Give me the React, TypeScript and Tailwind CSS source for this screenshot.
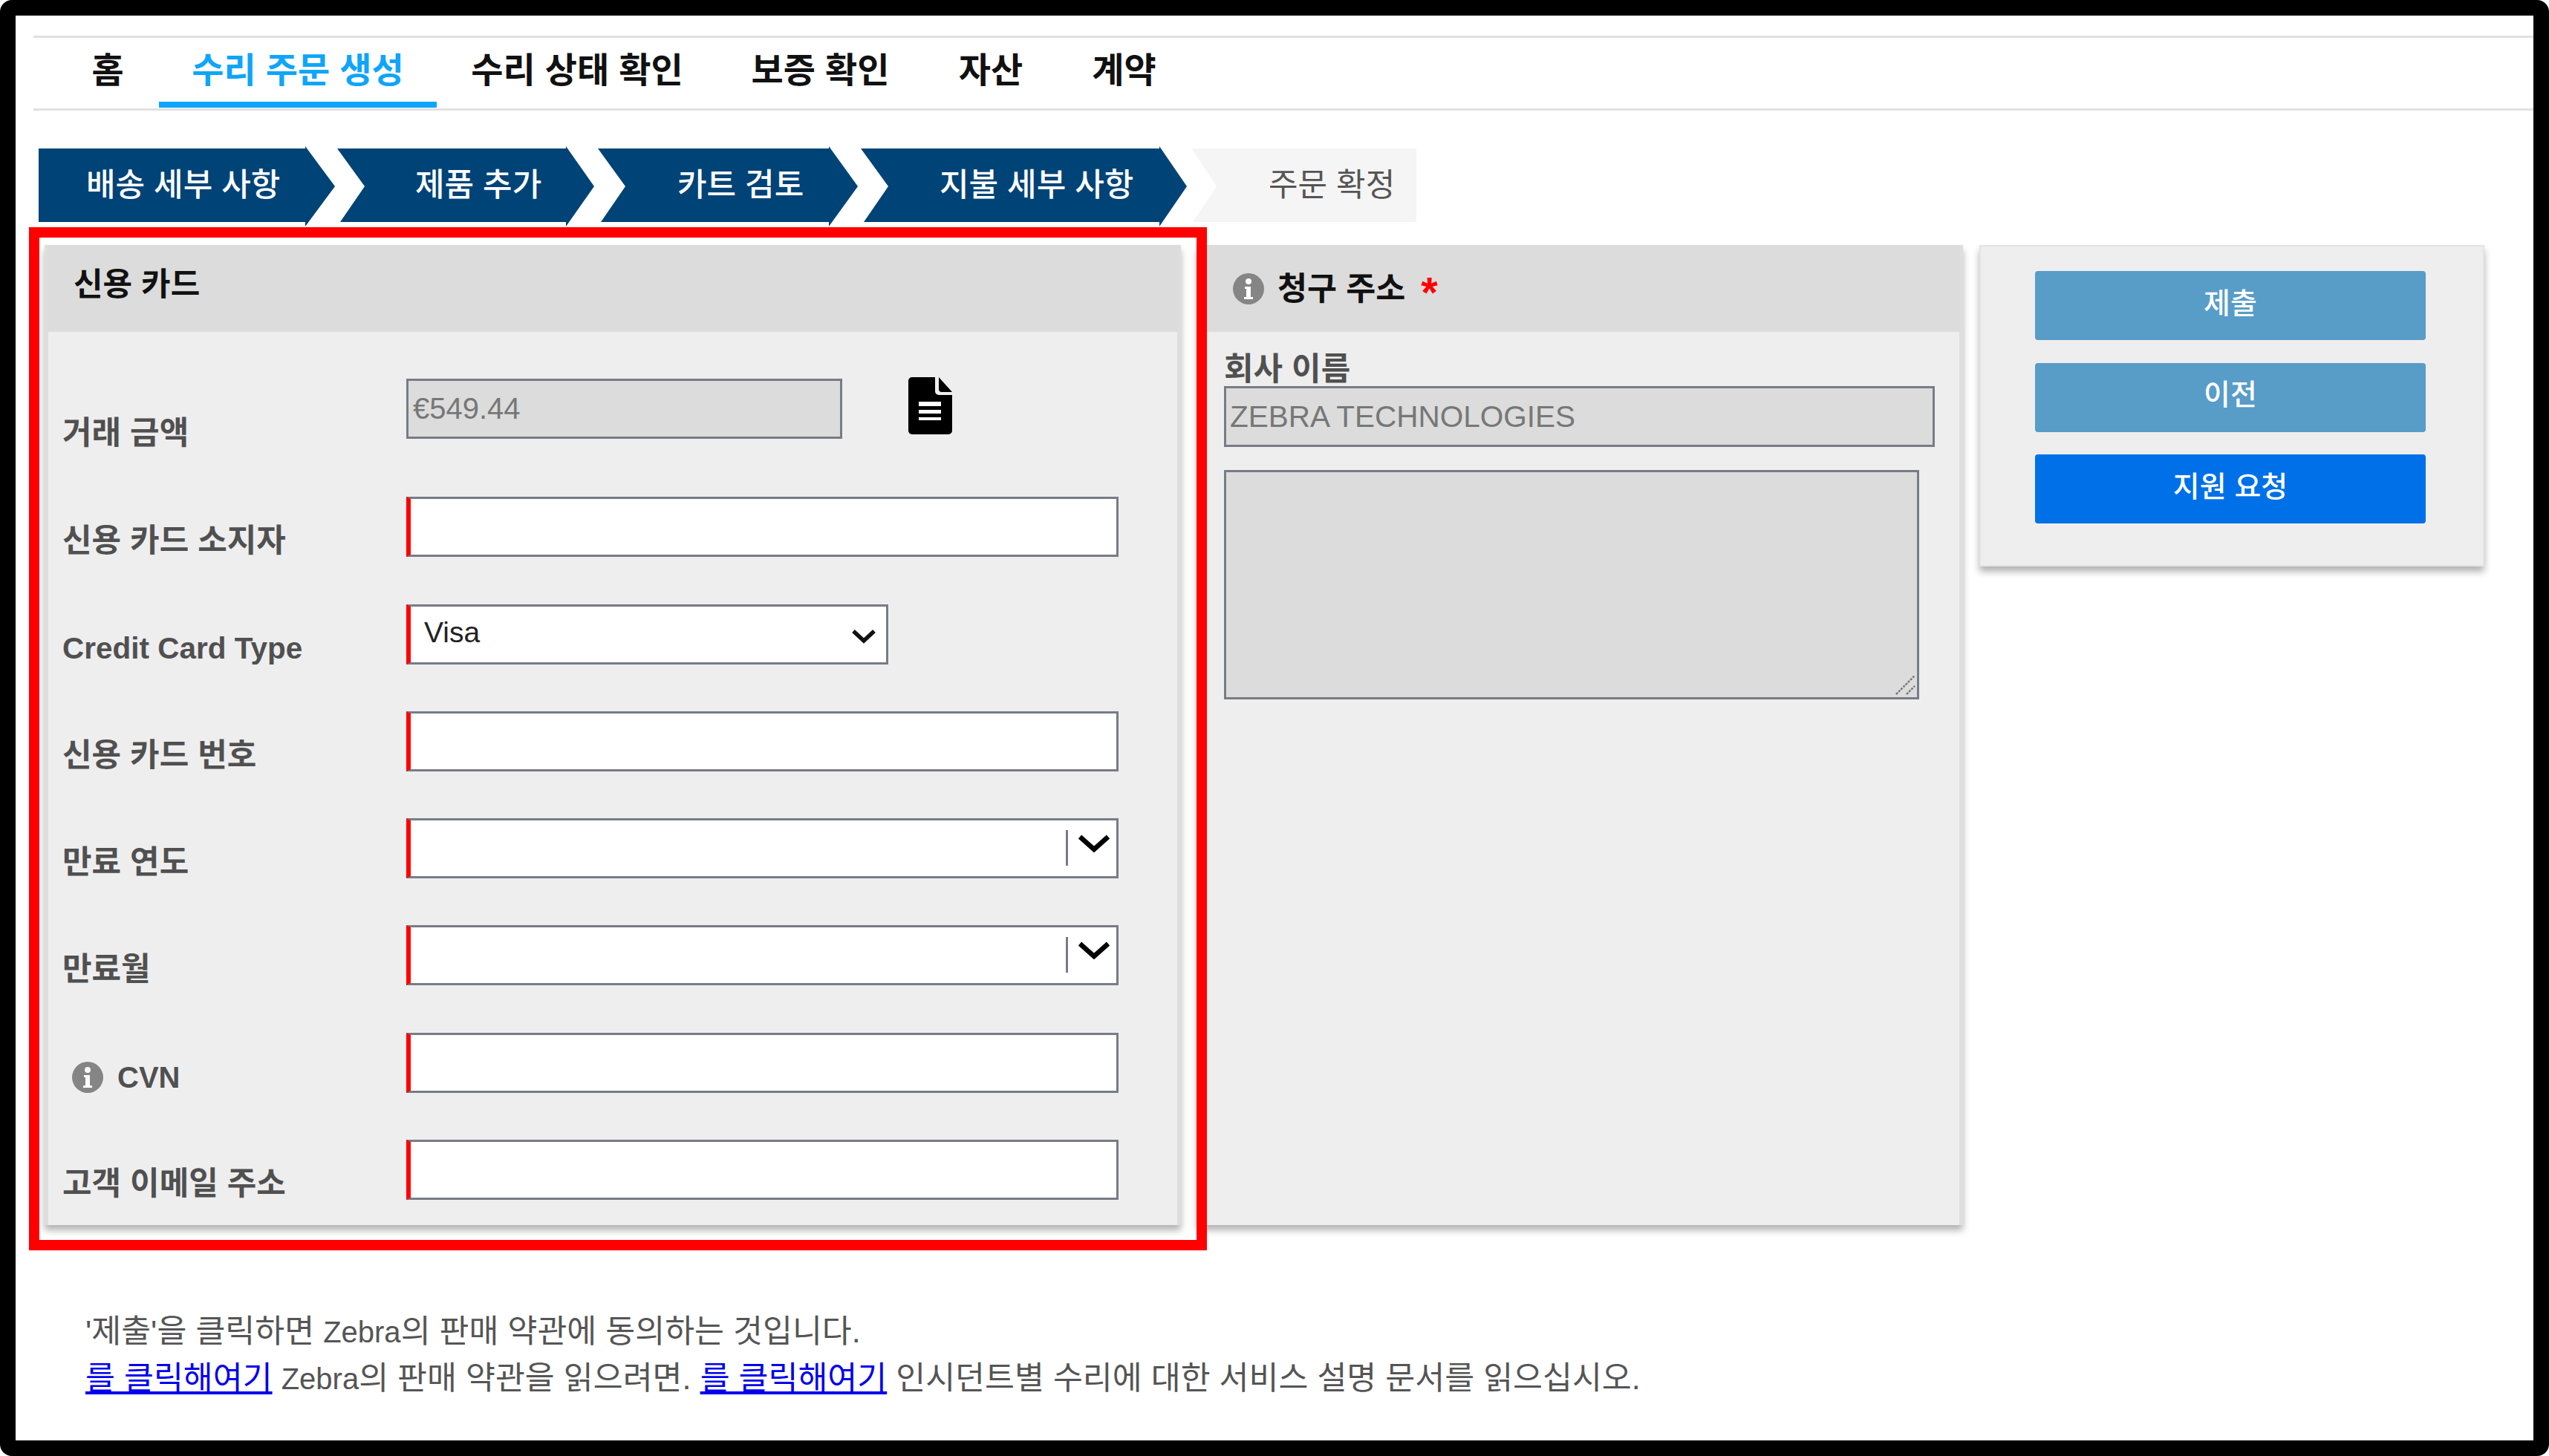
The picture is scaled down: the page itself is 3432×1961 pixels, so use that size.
import React from "react";

const navItems = [
  { t: "홈", w: "w-[138px]" },
  { t: "수리 주문 생성", w: "w-[374px]", active: true },
  { t: "수리 상태 확인", w: "w-[378px]" },
  { t: "보증 확인", w: "w-[277px]" },
  { t: "자산", w: "w-[182px]" },
  { t: "계약", w: "w-[177px]" },
];

function Info() {
  return (
    <svg viewBox="0 0 42 42" className="w-[42px] h-[42px] shrink-0">
      <circle cx="21" cy="21" r="21" fill="#858585" />
      <circle cx="21" cy="11" r="4" fill="#fff" />
      <path d="M16 18h8v14h3v3H15v-3h3V21h-2z" fill="#fff" />
    </svg>
  );
}

function DocIcon() {
  return (
    <svg viewBox="0 0 59 77" className="w-[59px] h-[77px] ml-[89px] self-start -mt-[2px] shrink-0">
      <path d="M5 0H36V19a5 5 0 0 0 5 5H59V72a5 5 0 0 1-5 5H5a5 5 0 0 1-5-5V5a5 5 0 0 1 5-5z" fill="#000" />
      <path d="M41 0L59 20H45a4 4 0 0 1-4-4z" fill="#000" />
      <rect x="14" y="33" width="30" height="6" fill="#fff" />
      <rect x="14" y="44" width="30" height="5" fill="#fff" />
      <rect x="14" y="54" width="30" height="4" fill="#fff" />
    </svg>
  );
}

function Label({ children, extra = "text-[43px]" }: { children: React.ReactNode; extra?: string }) {
  return (
    <label className={"w-[463px] shrink-0 flex items-center font-bold text-[#505050] leading-[43px] " + extra}>
      {children}
    </label>
  );
}

const field =
  "h-[81px] border-[3px] border-[#777c86] border-l-[6px] border-l-[#ff0000] bg-white";

function Combo() {
  return (
    <div className={field + " w-[959px] flex items-start justify-end pr-[8px]"}>
      <div className="w-[3px] h-[48px] mt-[13px] bg-[#777c86]" />
      <svg viewBox="0 0 44 24" className="w-[44px] h-[24px] ml-[13px] mt-[19px]">
        <path d="M3 3L22 20L41 3" fill="none" stroke="#000" strokeWidth="6.5" />
      </svg>
    </div>
  );
}

function Step({
  text,
  cls,
  done = true,
}: {
  text: string;
  cls: string;
  done?: boolean;
}) {
  return (
    <div
      className={
        "h-[108px] flex items-center text-[43px] leading-none pb-[3px] " +
        (done ? "bg-[#004377] text-white font-medium " : "bg-[#f5f5f5] text-[#555] ") +
        cls
      }
    >
      {text}
    </div>
  );
}

function Btn({ text, cls }: { text: string; cls: string }) {
  return (
    <button className={"w-[526px] h-[93px] rounded-[4px] text-white text-[39px] font-medium leading-none pb-[7px] " + cls}>
      {text}
    </button>
  );
}

export default function App() {
  return (
    <div className="w-[3432px] h-[1961px] bg-black rounded-[16px] p-[21px] font-['Liberation_Sans','Noto_Sans_CJK_KR',sans-serif] overflow-hidden">
      <div className="relative h-full bg-white flex flex-col">
        <nav className="ml-[24px] mt-[27px] h-[101px] border-y-[3px] border-[#e1e1e1] flex pl-[31px] shrink-0">
          {navItems.map((n) => (
            <div
              key={n.t}
              className={
                "h-[94px] flex items-center justify-center border-b-[8px] text-[47px] font-bold leading-none " +
                n.w +
                (n.active ? " border-[#0ea5fb] text-[#0ea5fb]" : " border-transparent text-[#111]")
              }
            >
              {n.t}
            </div>
          ))}
        </nav>

        <div className="flex ml-[31px] mt-[48px] shrink-0">
          <Step
            text="배송 세부 사항"
            cls="w-[399px] pl-[64px] [clip-path:polygon(0_3px,359px_3px,359px_0,100%_54px,359px_108px,359px_102px,0_102px)]"
          />
          <Step
            text="제품 추가"
            cls="w-[346px] ml-[3px] pl-[105px] [clip-path:polygon(0_3px,308px_3px,308px_0,100%_54px,308px_108px,308px_102px,4px_102px,37px_54px)]"
          />
          <Step
            text="카트 검토"
            cls="w-[350px] ml-[5px] pl-[107px] [clip-path:polygon(0_3px,311px_3px,311px_0,100%_54px,311px_108px,311px_102px,4px_102px,37px_54px)]"
          />
          <Step
            text="지불 세부 사항"
            cls="w-[439px] ml-[4px] pl-[106px] [clip-path:polygon(0_3px,402px_3px,402px_0,100%_54px,402px_108px,402px_102px,4px_102px,37px_54px)]"
          />
          <Step
            text="주문 확정"
            done={false}
            cls="w-[303px] ml-[6px] pl-[104px] font-normal [clip-path:polygon(0_3px,100%_3px,100%_102px,2px_102px,34px_54px)]"
          />
        </div>

        <div className="flex items-start ml-[39px] mt-[25px] shrink-0">
          {/* Credit card */}
          <section className="w-[1530px] h-[1320px] bg-[#eeeeee] border-x-[5px] border-[#dedede] shadow-[0_7px_9px_rgba(0,0,0,0.3)]">
            <header className="h-[117px] -mx-[1px] bg-[#dcdcdc] flex items-center pl-[35px] pb-[10px] text-[43px] font-bold text-[#111] leading-none">
              신용 카드
            </header>
            <div className="pl-[19px] pt-[63px] flex flex-col gap-[63.3px]">
              <div className="flex items-end h-[81px] mb-[15px]">
                <Label extra="text-[43px] -mb-[14px]">거래 금액</Label>
                <input
                  readOnly
                  value="€549.44"
                  className="w-[587px] h-[81px] border-[3px] border-[#777c86] bg-[#dcdcdc] pl-[6px] text-[40px] text-[#777]"
                />
                <DocIcon />
              </div>
              <div className="flex items-end h-[81px]">
                <Label>신용 카드 소지자</Label>
                <input className={field + " w-[959px]"} />
              </div>
              <div className="flex items-end h-[81px]">
                <Label extra="text-[40.5px]">Credit Card Type</Label>
                <div className="relative">
                  <select className={field + " w-[649px] appearance-none pl-[18px] text-[39px] text-[#222] pb-[3px]"}>
                    <option>Visa</option>
                  </select>
                  <svg viewBox="0 0 34 20" className="absolute right-[16px] top-[33px] w-[34px] h-[20px] pointer-events-none">
                    <path d="M3 3L17 16L31 3" fill="none" stroke="#111" strokeWidth="5.5" />
                  </svg>
                </div>
              </div>
              <div className="flex items-end h-[81px]">
                <Label>신용 카드 번호</Label>
                <input className={field + " w-[959px]"} />
              </div>
              <div className="flex items-end h-[81px]">
                <Label>만료 연도</Label>
                <Combo />
              </div>
              <div className="flex items-end h-[81px]">
                <Label>만료월</Label>
                <Combo />
              </div>
              <div className="flex items-end h-[81px]">
                <Label extra="text-[40px] pl-[13px] gap-[19px] -mb-[1px]">
                  <Info />
                  CVN
                </Label>
                <input className={field + " w-[959px]"} />
              </div>
              <div className="flex items-end h-[81px]">
                <Label>고객 이메일 주소</Label>
                <input className={field + " w-[959px]"} />
              </div>
            </div>
          </section>

          {/* Billing */}
          <section className="w-[1031px] h-[1320px] ml-[22px] bg-[#eeeeee] border-x-[5px] border-[#dedede] shadow-[0_7px_9px_rgba(0,0,0,0.3)]">
            <header className="h-[117px] -mx-[1px] bg-[#dcdcdc] flex items-center pl-[44px] text-[43.5px] font-bold text-[#111] leading-none">
              <Info />
              <span className="ml-[18px] mt-[3px]">청구 주소</span>
              <span className="ml-[21px] text-[#ff0000] text-[58px] mt-[10px]">*</span>
            </header>
            <div className="pl-[31px] pt-[29px] flex flex-col">
              <label className="font-bold text-[#505050] text-[43px] leading-[43px] mb-[1px]">회사 이름</label>
              <input
                readOnly
                value="ZEBRA TECHNOLOGIES"
                className="w-[957px] h-[82px] border-[3px] border-[#777c86] bg-[#dcdcdc] pl-[5px] text-[40.5px] text-[#777]"
              />
              <div className="relative w-[936px] h-[309px] mt-[31px]">
                <textarea
                  readOnly
                  className="block w-full h-full border-[3px] border-[#777c86] bg-[#dcdcdc] resize-none"
                />
                <svg viewBox="0 0 30 30" className="absolute right-[4px] bottom-[5px] w-[30px] h-[30px]">
                  <path d="M3 28L28 3M17 28L28 17" stroke="#777" strokeWidth="2.5" strokeDasharray="3 1.5" fill="none" />
                </svg>
              </div>
            </div>
          </section>

          {/* Actions */}
          <aside className="w-[680px] h-[433px] ml-[22px] bg-[#eeeeee] border-2 border-[#e3e3e3] shadow-[0_7px_9px_rgba(0,0,0,0.3)] pl-[73px] pt-[33px] flex flex-col gap-[30.5px]">
            <Btn text="제출" cls="bg-[#589cc8]" />
            <Btn text="이전" cls="bg-[#589cc8]" />
            <Btn text="지원 요청" cls="bg-[#0070e8]" />
          </aside>
        </div>

        <footer className="ml-[94px] mt-[112px] text-[43.4px] leading-[62px] text-[#555] whitespace-nowrap">
          <p>
            '제출'을 클릭하면 <span className="text-[40px]">Zebra</span>의 판매 약관에 동의하는 것입니다.
          </p>
          <p>
            <a href="#" className="text-[#0000ee] underline">를 클릭해여기</a>{" "}
            <span className="text-[40px]">Zebra</span>의 판매 약관을 읽으려면.{" "}
            <a href="#" className="text-[#0000ee] underline">를 클릭해여기</a> 인시던트별 수리에 대한 서비스 설명 문서를 읽으십시오.
          </p>
        </footer>

        {/* annotation frame over the page */}
        <div className="absolute left-[18px] top-[285px] w-[1586px] h-[1378px] border-[14px] border-[#ff0000] pointer-events-none" />
      </div>
    </div>
  );
}
